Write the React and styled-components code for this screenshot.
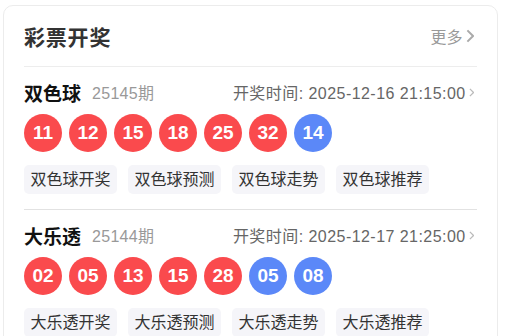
import React from "react";
import styled, { createGlobalStyle } from "styled-components";

const GlobalStyle = createGlobalStyle`
  body {
    margin: 0;
    background: #fff;
    font-family: "Liberation Sans", "Noto Sans CJK SC", sans-serif;
  }
`;

const StyledCard = styled.div`
  box-sizing: border-box;
  width: 495px;
  margin: 5px 0 0 3px;
  padding: 0 20px;
  background: #fff;
  border: 1.5px solid #ececec;
  border-radius: 10px;
  min-height: 360px;
`;
const StyledHeader = styled.div`
  display: flex;
  align-items: center;
  justify-content: space-between;
  height: 60px;
  border-bottom: 1px solid #ededed;
`;
const StyledTitle = styled.div`
  font-size: 21px;
  font-weight: bold;
  color: #333;
  letter-spacing: 0.8px;
`;
const StyledMore = styled.div`
  display: flex;
  align-items: center;
  font-size: 16px;
  color: #999;
  margin-right: 3px;
`;
const StyledSection = styled.div`
  padding: 13px 0 15px;
  border-bottom: ${({ $last }) => ($last ? "none" : "1px solid #e2e2e2")};
`;
const StyledHead = styled.div`
  display: flex;
  align-items: center;
  height: 24px;
`;
const StyledName = styled.div`
  font-size: 19px;
  font-weight: bold;
  color: #111;
`;
const StyledIssue = styled.div`
  font-size: 16px;
  color: #999;
  margin-left: 11px;
  letter-spacing: 0.3px;
`;
const StyledTime = styled.div`
  margin-left: auto;
  display: flex;
  align-items: center;
  font-size: 16px;
  color: #666;
  letter-spacing: 0.45px;
  margin-right: 3px;
`;
const StyledBalls = styled.div`
  display: flex;
  gap: 7px;
  margin-top: 10px;
`;
const StyledBall = styled.div`
  width: 38px;
  height: 38px;
  border-radius: 50%;
  background: ${({ $blue }) => ($blue ? "#5b88f8" : "#fa4a4d")};
  color: #fff;
  display: flex;
  align-items: center;
  justify-content: center;
  font-family: "Liberation Sans", sans-serif;
  font-size: 19px;
  font-weight: bold;
`;
const StyledTags = styled.div`
  display: flex;
  gap: 11px;
  margin-top: 13px;
`;
const StyledTag = styled.div`
  height: 29px;
  line-height: 29px;
  padding: 0 6.5px;
  background: #f5f5f9;
  border-radius: 5px;
  font-size: 16px;
  color: #333;
`;

const Chevron = ({ size = 10, color = "#bbb" }) => (
  <svg width={size * 0.6} height={size} viewBox="0 0 6 10" style={{ marginLeft: 3 }}>
    <path d="M1 1l4 4-4 4" fill="none" stroke={color} strokeWidth="1.4" />
  </svg>
);

const lotteries = [
  {
    name: "双色球",
    issue: "25145期",
    time: "2025-12-16 21:15:00",
    red: ["11", "12", "15", "18", "25", "32"],
    blue: ["14"],
  },
  {
    name: "大乐透",
    issue: "25144期",
    time: "2025-12-17 21:25:00",
    red: ["02", "05", "13", "15", "28"],
    blue: ["05", "08"],
  },
];

const tagNames = ["开奖", "预测", "走势", "推荐"];

const App = () => {
  return (
    <>
      <GlobalStyle />
      <StyledCard>
        <StyledHeader>
          <StyledTitle>彩票开奖</StyledTitle>
          <StyledMore>
            更多
            <Chevron size={14} color="#aaa" />
          </StyledMore>
        </StyledHeader>
        {lotteries.map((l, i) => (
          <StyledSection key={l.name} $last={i === lotteries.length - 1}>
            <StyledHead>
              <StyledName>{l.name}</StyledName>
              <StyledIssue>{l.issue}</StyledIssue>
              <StyledTime>
                开奖时间: {l.time}
                <Chevron size={9} />
              </StyledTime>
            </StyledHead>
            <StyledBalls>
              {l.red.map((n, k) => (
                <StyledBall key={"r" + k}>{n}</StyledBall>
              ))}
              {l.blue.map((n, k) => (
                <StyledBall key={"b" + k} $blue>
                  {n}
                </StyledBall>
              ))}
            </StyledBalls>
            <StyledTags>
              {tagNames.map((t) => (
                <StyledTag key={t}>{l.name + t}</StyledTag>
              ))}
            </StyledTags>
          </StyledSection>
        ))}
      </StyledCard>
    </>
  );
};

export default App;
